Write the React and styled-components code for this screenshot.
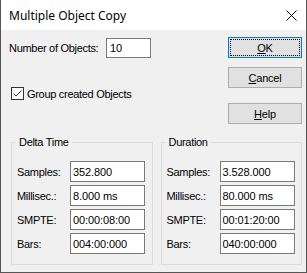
import React from 'react';
import styled, { createGlobalStyle } from 'styled-components';

const GlobalStyle = createGlobalStyle`
  html, body {
    margin: 0;
    padding: 0;
    background: #f0f0f0;
  }
  * {
    box-sizing: border-box;
  }
`;

const Window = styled.div`
  width: 307px;
  height: 273px;
  display: flex;
  flex-direction: column;
  background: #f0f0f0;
  border: 1px solid #555;
  border-top: none;
  font-family: "Liberation Sans", Arial, sans-serif;
  font-size: 11px;
  color: #000;
  overflow: hidden;
`;

const TitleBar = styled.div`
  height: 30px;
  flex-shrink: 0;
  display: flex;
  align-items: center;
  justify-content: space-between;
  padding: 0 9px 0 8px;
  background: #fff;
`;

const Title = styled.span`
  font-family: "Noto Sans", "Open Sans", sans-serif;
  font-size: 12px;
  line-height: 16px;
  margin-top: 1px;
`;

const CloseIcon = styled.svg`
  width: 11px;
  height: 11px;
  display: block;
`;

const Body = styled.div`
  flex: 1;
  display: flex;
  flex-direction: column;
  padding: 7px 4px 0 8px;
`;

const Top = styled.div`
  display: flex;
  justify-content: space-between;
`;

const LeftColumn = styled.div`
  display: flex;
  flex-direction: column;
`;

const NumberRow = styled.div`
  display: grid;
  grid-template-columns: 97px 45px;
  align-items: center;
  margin-top: 1px;
`;

const Label = styled.span`
  white-space: nowrap;
  letter-spacing: -0.3px;
`;

const TextBox = styled.div`
  height: ${p => p.$h || 21}px;
  background: #fff;
  border: 1px solid #7a7a7a;
  padding: 0 ${p => p.$pad || 2}px;
  display: flex;
  align-items: center;
  white-space: nowrap;
  letter-spacing: -0.1px;
`;

const CheckRow = styled.label`
  display: flex;
  align-items: center;
  gap: 3px;
  margin: 29px 0 0 2px;
`;

const CheckBox = styled.span`
  width: 13px;
  height: 13px;
  border: 1px solid #333;
  background: #fff;
  display: block;
`;

const ButtonColumn = styled.div`
  display: flex;
  flex-direction: column;
  width: 74px;
`;

const Button = styled.div`
  height: 21px;
  margin-top: ${p => p.$gap || 0}px;
  background: #e1e1e1;
  border: 1px solid ${p => (p.$default ? '#0078d7' : '#adadad')};
  display: flex;
  align-items: center;
  justify-content: center;
  position: relative;
  letter-spacing: -0.2px;

  ${p =>
    p.$default &&
    `
    &::after {
      content: '';
      position: absolute;
      inset: 1px;
      border: 1px dotted #000;
    }
  `}
`;

const Mnemonic = styled.span`
  text-decoration: underline;
`;

const Groups = styled.div`
  display: flex;
  gap: 8px;
  margin: 12px 0 0 2px;
`;

const Group = styled.fieldset`
  width: 142px;
  margin: 0;
  padding: 12px 7px 10px 5px;
  border: 1px solid #dcdcdc;
  min-inline-size: 0;
`;

const Legend = styled.legend`
  margin-left: -2px;
  padding: 0 3px 0 4px;
  line-height: 13px;
  letter-spacing: -0.3px;
`;

const Grid = styled.div`
  display: grid;
  grid-template-columns: 53px 75px;
  row-gap: 3px;
  align-items: center;
`;

const groups = [
  {
    title: 'Delta Time',
    values: ['352.800', '8.000 ms', '00:00:08:00', '004:00:000'],
  },
  {
    title: 'Duration',
    values: ['3.528.000', '80.000 ms', '00:01:20:00', '040:00:000'],
  },
];

const labels = ['Samples:', 'Millisec.:', 'SMPTE:', 'Bars:'];

export default function App() {
  return (
    <>
      <GlobalStyle />
      <Window>
        <TitleBar>
          <Title>Multiple Object Copy</Title>
          <CloseIcon viewBox="0 0 11 11">
            <path d="M0.5 0.5 L10.5 10.5 M10.5 0.5 L0.5 10.5" stroke="#000" strokeWidth="1" />
          </CloseIcon>
        </TitleBar>
        <Body>
          <Top>
            <LeftColumn>
              <NumberRow>
                <Label>Number of Objects:</Label>
                <TextBox $h={20} $pad={3}>10</TextBox>
              </NumberRow>
              <CheckRow>
                <CheckBox>
                  <svg width="11" height="11" viewBox="0 0 11 11" style={{ display: 'block' }}>
                    <polyline points="1.5,5.5 4,8 9.5,2.5" fill="none" stroke="#333" strokeWidth="1" />
                  </svg>
                </CheckBox>
                <Label>Group created Objects</Label>
              </CheckRow>
            </LeftColumn>
            <ButtonColumn>
              <Button $default>
                <span><Mnemonic>O</Mnemonic>K</span>
              </Button>
              <Button $gap={9}>
                <span><Mnemonic>C</Mnemonic>ancel</span>
              </Button>
              <Button $gap={15}>
                <span><Mnemonic>H</Mnemonic>elp</span>
              </Button>
            </ButtonColumn>
          </Top>
          <Groups>
            {groups.map(g => (
              <Group key={g.title}>
                <Legend>{g.title}</Legend>
                <Grid>
                  {labels.map((l, i) => (
                    <React.Fragment key={l}>
                      <Label>{l}</Label>
                      <TextBox>{g.values[i]}</TextBox>
                    </React.Fragment>
                  ))}
                </Grid>
              </Group>
            ))}
          </Groups>
        </Body>
      </Window>
    </>
  );
}
